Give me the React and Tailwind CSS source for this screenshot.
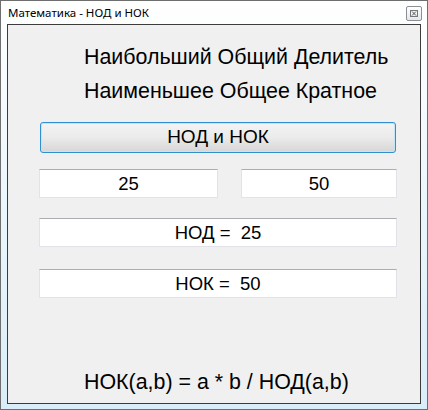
import React from 'react';

const Field = ({ children, className = '' }) => (
  <div
    className={`h-[29px] bg-white border border-[#e2e3ea] border-t-[#abadb3] flex items-center justify-center text-[18.5px] text-black ${className}`}
  >
    {children}
  </div>
);

const App = () => {
  return (
    <div
      className="w-[428px] h-[410px] border border-[#6e6e6e] bg-gradient-to-b from-white via-[#eaf6fd] to-[#d9edf9] flex flex-col"
      style={{ fontFamily: '"Liberation Sans", Arial, sans-serif' }}
    >
      {/* Title bar */}
      <div className="h-[23px] flex items-center justify-between pl-[7px] pr-[5px]">
        <span className="text-[11.5px] text-black" style={{ fontFamily: '"Noto Sans", sans-serif' }}>
          Математика - НОД и НОК
        </span>
        <div className="w-[16px] h-[15px] mt-[1px] border border-[#8a8f96] rounded-[2px] bg-gradient-to-b from-white to-[#e4e8ec] flex items-center justify-center">
          <svg width="8" height="7" viewBox="0 0 8 7">
            <rect x="0.5" y="0.5" width="7" height="6" fill="none" stroke="#777" />
            <path d="M2 1.5 L6 5.5 M6 1.5 L2 5.5" stroke="#555" strokeWidth="1" />
          </svg>
        </div>
      </div>

      {/* Client area */}
      <div className="mx-[6px] mb-[5px] flex-1 border border-[#3c3c3c] bg-[#f0f0f0] flex flex-col pl-[31px]">
        <div className="pl-[45px] pt-[15px] text-[21.4px] leading-[34px] text-black">
          <div>Наибольший Общий Делитель</div>
          <div>Наименьшее Общее Кратное</div>
        </div>

        <button className="mt-[14px] ml-px h-[31px] w-[356px] rounded-[3px] border border-[#2f8fd0] bg-gradient-to-b from-[#f3f3f3] via-[#ebebeb] to-[#d6d6d6] shadow-[inset_0_0_0_1px_#c4e5f6] text-[19px] text-black">
          НОД и НОК
        </button>

        <div className="mt-[16px] flex gap-[23px]">
          <Field className="w-[179px]">25</Field>
          <Field className="w-[156px]">50</Field>
        </div>

        <Field className="mt-[20px] w-[358px]">НОД =&nbsp; 25</Field>
        <Field className="mt-[22px] w-[358px]">НОК =&nbsp; 50</Field>

        <div className="mt-auto mb-[9px] pl-[45px] text-[21.4px] leading-[24px] text-black">
          НОК(a,b) = a * b / НОД(a,b)
        </div>
      </div>
    </div>
  );
};

export default App;
